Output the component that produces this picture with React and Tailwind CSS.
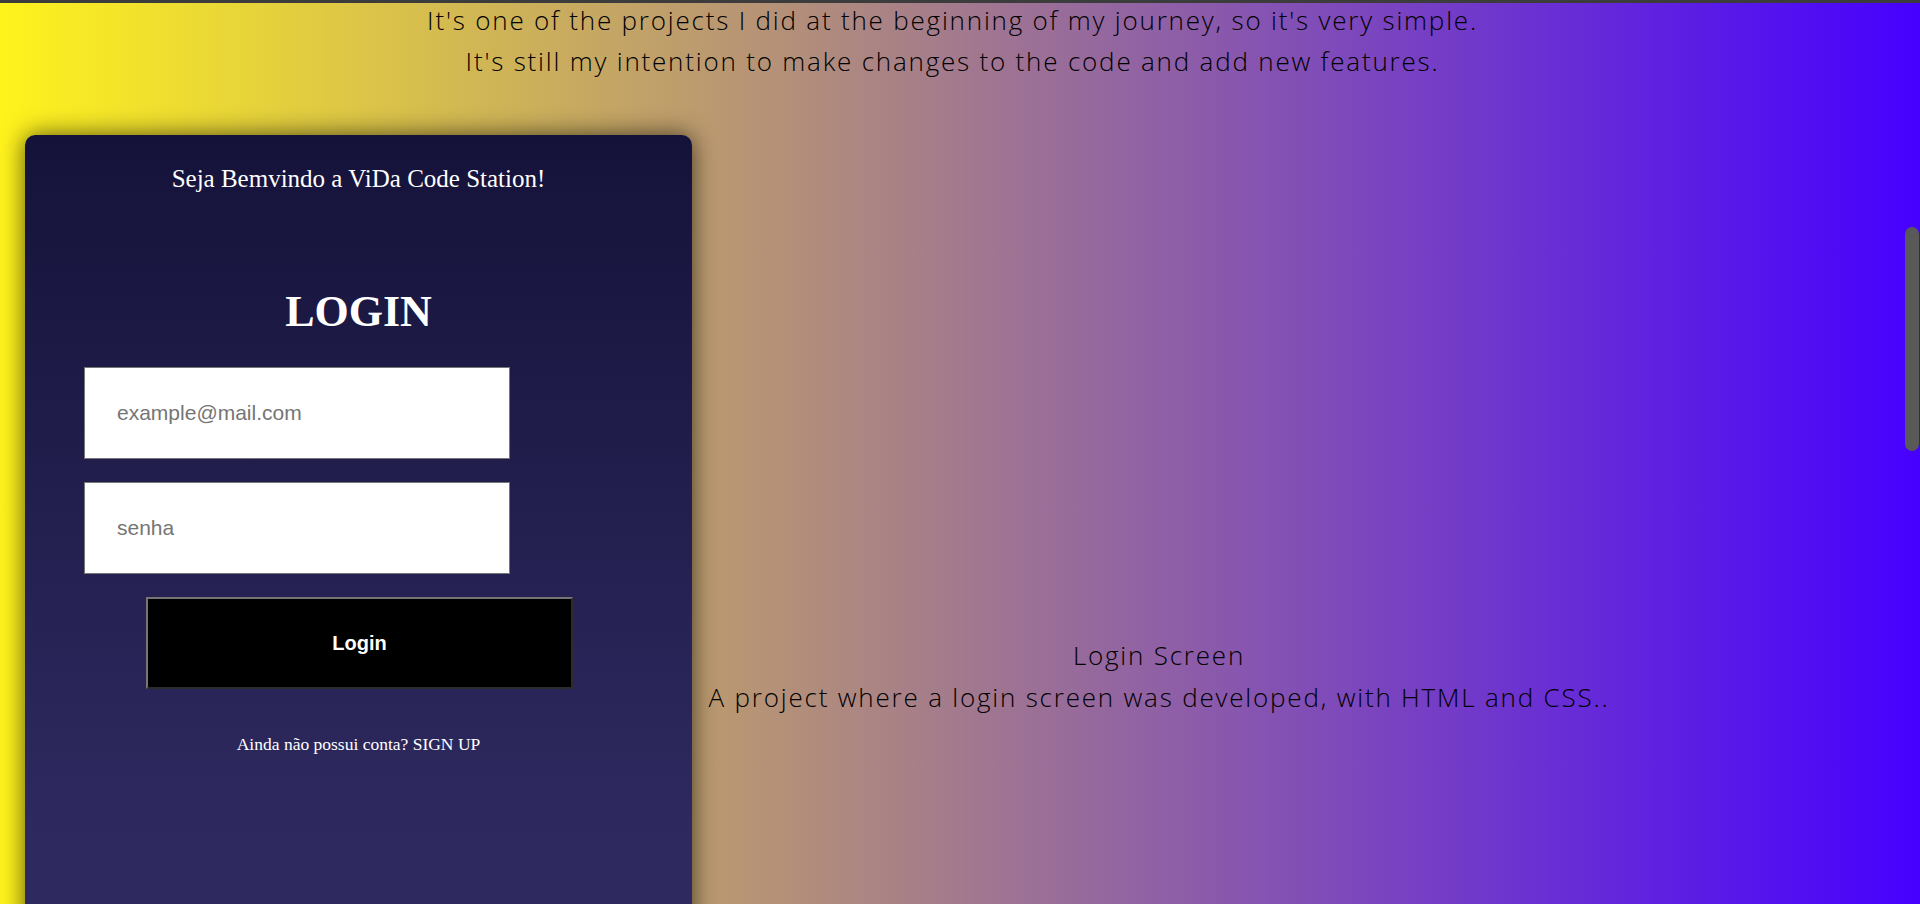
import React from 'react';

const poppins = { fontFamily: '"Open Sans", "Noto Sans", sans-serif' };

const LoginCard = () => {
  return (
    <div className="ml-[25px] w-[667px] h-[1000px] shrink-0 rounded-[10px] bg-[linear-gradient(to_bottom,#15123a,#2e2a60_70%)] shadow-[0_0_24px_rgba(0,0,0,0.65)] font-['Liberation_Serif',serif] text-white">
      <h2 className="pt-[30px] text-center text-[25px] leading-[28px]">Seja Bemvindo a ViDa Code Station!</h2>

      <h1 className="mt-[95px] text-center text-[44px] font-bold leading-[48px]">LOGIN</h1>

      <div className="mt-[31px] ml-[59px] flex flex-col gap-[23px] font-['Liberation_Sans',sans-serif]">
        <input
          type="email"
          placeholder="example@mail.com"
          className="h-[92px] w-[426px] border border-[#767676] bg-white pl-[32px] text-[21px] text-black placeholder:text-[#757575] outline-none"
        />
        <input
          type="password"
          placeholder="senha"
          className="h-[92px] w-[426px] border border-[#767676] bg-white pl-[32px] text-[21px] text-black placeholder:text-[#757575] outline-none"
        />
      </div>

      <button className="mt-[23px] ml-[121px] h-[92px] w-[427px] border-2 border-t-[#767676] border-l-[#767676] border-r-[#2c2c2c] border-b-[#2c2c2c] bg-black font-['Liberation_Sans',sans-serif] text-[20px] font-bold text-white">
        Login
      </button>

      <p className="mt-[45px] text-center text-[17.5px] leading-[20px]">
        Ainda não possui conta? SIGN UP
      </p>
    </div>
  );
};

export default function App() {
  return (
    <div className="relative h-[904px] w-[1920px] overflow-hidden bg-[linear-gradient(to_right,#fff31c,#4600ff)]">
      <div className="absolute left-0 top-0 h-[3px] w-full bg-[#3c3c3c]" />

      <div className="w-[1905px]">
        <div style={poppins} className="text-center text-[26px] font-light leading-[41px] tracking-[1.8px] text-black">
          <p>It's one of the projects I did at the beginning of my journey, so it's very simple.</p>
          <p>It's still my intention to make changes to the code and add new features.</p>
        </div>

        <div className="mt-[53px] flex items-start">
          <LoginCard />
          <div style={poppins} className="mt-[499px] w-[934px] text-center text-[26px] font-light leading-[42px] tracking-[1.8px] text-black">
            <p>Login Screen</p>
            <p>A project where a login screen was developed, with HTML and CSS..</p>
          </div>
        </div>
      </div>

      <div className="absolute right-[1px] top-[227px] h-[224px] w-[14px] rounded-full bg-[#595959]" />
    </div>
  );
}
